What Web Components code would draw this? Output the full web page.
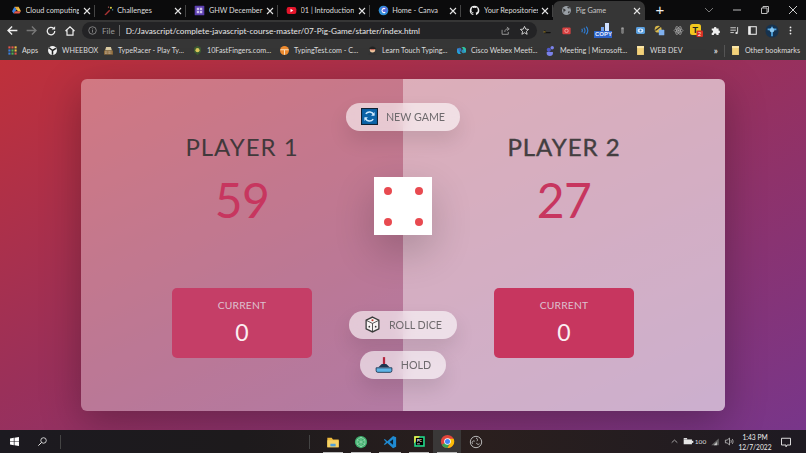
<!DOCTYPE html>
<html lang="en"><head><meta charset="utf-8"><title>Pig Game</title>
<style>
html,body{margin:0;height:100%;overflow:hidden}
body{width:806px;height:453px;font-family:Lato,"Noto Sans",sans-serif}
</style></head><body>
<browser-window>
  <tab-strip>
    <browser-tab icon="drive">Cloud computing</browser-tab>
    <browser-tab icon="spark">Challenges</browser-tab>
    <browser-tab icon="ghw">GHW December</browser-tab>
    <browser-tab icon="yt">01 | Introduction</browser-tab>
    <browser-tab icon="canva">Home - Canva</browser-tab>
    <browser-tab icon="github">Your Repositories</browser-tab>
    <browser-tab icon="globe" active>Pig Game</browser-tab>
  </tab-strip>
  <browser-toolbar></browser-toolbar>
  <bookmark-bar>
    <book-mark icon="apps" w="16">Apps</book-mark>
    <book-mark icon="wheel" w="32">WHEEBOX</book-mark>
    <book-mark icon="racer" w="65">TypeRacer - Play Ty...</book-mark>
    <book-mark icon="fast" w="63">10FastFingers.com...</book-mark>
    <book-mark icon="orange" w="64">TypingTest.com - C...</book-mark>
    <book-mark icon="learn" w="65">Learn Touch Typing...</book-mark>
    <book-mark icon="webex" w="65">Cisco Webex Meeti...</book-mark>
    <book-mark icon="teams" w="66">Meeting | Microsoft...</book-mark>
    <book-mark icon="folder" w="31">WEB DEV</book-mark>
  </bookmark-bar>
  <pig-game>
    <game-player name="PLAYER 1" score="59" current="0"></game-player>
    <game-player name="PLAYER 2" score="27" current="0" active></game-player>
  </pig-game>
  <task-bar></task-bar>
</browser-window>

<script>
const ICONS={
 drive:'<path d="M5 2.500h6l-3 5z" fill="#e8a33d"/><path d="M5 2.500L1.500 9l2.300 3.500L8 7z" fill="#3b82e0"/><path d="M3.800 12.500h8.500L14.500 9H6z" fill="#e2574c"/><path d="M11 2.500L14.500 9H10L8 6z" fill="#f4c242"/>',
 spark:'<path d="M2 14L9 7l1.500 1.500L4 15z" fill="#a33"/><circle cx="11.500" cy="4" r="1.500" fill="#d8d040"/><circle cx="14" cy="7" r="1" fill="#5bc"/><circle cx="8" cy="3" r="1" fill="#c66"/>',
 ghw:'<rect x="1" y="1" width="14" height="14" rx="1" fill="#5c3fb0"/><rect x="4" y="4" width="8" height="8" fill="#cfc4ee"/><path d="M4 8h8M8 4v8" stroke="#5c3fb0"/>',
 yt:'<rect x="1" y="3" width="14" height="10" rx="3" fill="#e4152b"/><path d="M6.500 5.500v5l4-2.500z" fill="#fff"/>',
 canva:'<circle cx="8" cy="8" r="7" fill="#2f8fd8"/><circle cx="9" cy="7" r="4.500" fill="#6a5be0" opacity=".7"/><path d="M10.500 5.500a3 3 0 1 0 0 5" fill="none" stroke="#fff" stroke-width="1.500"/>',
 github:'<path d="M8 1a7 7 0 0 0-2.200 13.600c.4.100.5-.1.500-.3v-1.300c-1.900.4-2.300-.9-2.300-.9-.3-.8-.8-1-.8-1-.6-.4.100-.4.100-.4.700 0 1 .7 1 .7.600 1.100 1.700.8 2.100.6.100-.5.200-.8.400-1-1.600-.2-3.200-.8-3.200-3.500 0-.8.300-1.400.700-1.900-.1-.2-.3-.9.100-1.900 0 0 .6-.2 2 .7a7 7 0 0 1 3.600 0c1.400-.9 2-.7 2-.7.400 1 .2 1.700.1 1.900.4.500.7 1.100.7 1.900 0 2.700-1.600 3.300-3.200 3.500.3.200.5.600.5 1.300v1.900c0 .2.100.4.500.3A7 7 0 0 0 8 1z" fill="#eee"/>',
 globe:'<circle cx="8" cy="8" r="6.500" fill="#9aa0a6"/><path d="M3 5l3 1 1 2-2 1-1 3M10 2l-1 2 2 1 3-.5M11 9l2 .5-1.500 3L10 11z" fill="#3a3a3a"/>',
 apps:'<g><rect x="2" y="2" width="3" height="3" fill="#e2574c"/><rect x="6.500" y="2" width="3" height="3" fill="#e2574c"/><rect x="11" y="2" width="3" height="3" fill="#f4c242"/><rect x="2" y="6.500" width="3" height="3" fill="#3b82e0"/><rect x="6.500" y="6.500" width="3" height="3" fill="#4caf50"/><rect x="11" y="6.500" width="3" height="3" fill="#f4c242"/><rect x="2" y="11" width="3" height="3" fill="#3b82e0"/><rect x="6.500" y="11" width="3" height="3" fill="#4caf50"/><rect x="11" y="11" width="3" height="3" fill="#e2574c"/></g>',
 wheel:'<circle cx="8" cy="8" r="6.500" fill="#f2f2f2"/><path d="M8 8L3 4M8 8l5-3M8 8v6" stroke="#222" stroke-width="2.200"/>',
 racer:'<path d="M3 8l1.500-5h7L13 8z" fill="#d9c9a0"/><rect x="1.500" y="8" width="13" height="6" fill="#8d6a3a"/><path d="M3 10h10M3 12h10" stroke="#eee" stroke-dasharray="1 1"/>',
 fast:'<path d="M8 1l5 3v6l-5 5-5-5V4z" fill="#3c5a32"/><circle cx="8" cy="7.500" r="3" fill="#d8c75a"/>',
 orange:'<circle cx="8" cy="8" r="6.500" fill="#ee8a2e"/><path d="M2 7h12M8 7v7" stroke="#fbe0c0" stroke-width="1.500"/>',
 learn:'<circle cx="8" cy="7" r="4" fill="#f0c8a0"/><path d="M3 6c0-5 10-5 10 0z" fill="#222"/><path d="M2 14c1-3 11-3 12 0z" fill="#333"/><rect x="5" y="6.500" width="6" height="1" fill="#c33"/>',
 webex:'<path d="M1.500 5c3-1 3 7 6.500 7-1 1.500-5 2-6.500-1.500z" fill="#23a6d9"/><path d="M14.500 11c-3 1-3-7-6.500-7 1-1.500 5-2 6.500 1.500z" fill="#2ec6a0"/><circle cx="5" cy="7" r="3" fill="#3b82e0" opacity=".8"/><circle cx="11" cy="9" r="3" fill="#2fa8d8" opacity=".8"/>',
 teams:'<circle cx="10.500" cy="4" r="2.500" fill="#7b83eb"/><circle cx="5.500" cy="7" r="3" fill="#5059c9"/><path d="M2.500 10h9v2a4.500 4 0 0 1-9 0z" fill="#7b83eb"/>',
 folder:'<path d="M3 1.500h10v13H3z" fill="#f4d27a"/><path d="M3 1.500h10v3H3z" fill="#fbe6a8"/>',
 arrowL:'<path d="M14 8H3M7.500 3L2.500 8l5 5" fill="none" stroke="#eee" stroke-width="1.700"/>',
 arrowR:'<path d="M2 8h11M8.500 3l5 5-5 5" fill="none" stroke="#777" stroke-width="1.700"/>',
 reload:'<path d="M13 8a5 5 0 1 1-1.500-3.500" fill="none" stroke="#eee" stroke-width="1.700"/><path d="M13.500 1.500v4.500H9z" fill="#eee"/>',
 home:'<path d="M2 8l6-5.500L14 8M4 7v6.500h8V7" fill="none" stroke="#eee" stroke-width="1.600"/>',
 info:'<circle cx="8" cy="8" r="5.500" fill="none" stroke="#999" stroke-width="1.100"/><path d="M8 7v4M8 5v1.200" stroke="#999" stroke-width="1.100"/>',
 share:'<path d="M3 7v6.500h9V10M7 10c0-3 2-4.500 5-4.500M10 3l3.500 2.700L10 8.300" fill="none" stroke="#aaa" stroke-width="1.200"/>',
 star:'<path d="M8 2l1.800 4 4.200.400-3.200 2.800 1 4.300L8 11.200l-3.800 2.300 1-4.300L2 6.400 6.200 6z" fill="none" stroke="#ddd" stroke-width="1.300"/>',
 blk:'<path d="M3 8h2l1 2h7l-1 2H3z" fill="#111"/><path d="M1 10l4-1v2z" fill="#c9a227"/>',
 cam:'<rect x="2" y="3.500" width="12" height="10" rx="1.500" fill="#d84040"/><circle cx="8" cy="8.500" r="2.500" fill="none" stroke="#f8c0c0"/>',
 wave:'<path d="M4 5.500c1 1.500 1 3.500 0 5M7 4c2 2.500 2 6 0 8M10.500 2.500c3 3.500 3 7.500 0 11" fill="none" stroke="#2f7fd8" stroke-width="1.600"/>',
 mic:'<rect x="6" y="3" width="4" height="10" rx="2" fill="#7a7a7a"/><rect x="6.500" y="5" width="3" height="1" fill="#bbb"/>',
 eye:'<rect x="1.500" y="3" width="13" height="10" rx="2" fill="#5aa0e0"/><ellipse cx="8" cy="8" rx="4" ry="3" fill="#dcecff"/><circle cx="8" cy="8" r="1.500" fill="#2f6db0"/>',
 color:'<circle cx="6" cy="6" r="5" fill="#d8b84a"/><path d="M2 8l9-7" stroke="#333" stroke-width="2"/><rect x="7" y="7" width="8" height="8" rx="1" fill="#7fb0ee"/>',
 atom:'<g fill="none" stroke="#aaa"><ellipse cx="8" cy="8" rx="6.500" ry="2.500"/><ellipse cx="8" cy="8" rx="6.500" ry="2.500" transform="rotate(60 8 8)"/><ellipse cx="8" cy="8" rx="6.500" ry="2.500" transform="rotate(120 8 8)"/></g><circle cx="8" cy="8" r="1.500" fill="#aaa"/>',
 puzzle:'<path d="M2.500 5h3a2 2 0 1 1 4 0h3v3a2 2 0 1 1 0 4v2.500h-3a2 2 0 1 0-4 0h-3v-3a2 2 0 1 0 0-4z" fill="#eee"/>',
 music:'<path d="M2 4h8M2 7.500h8M2 11h5" stroke="#ddd" stroke-width="1.300"/><path d="M12.500 3v8" stroke="#ddd" stroke-width="1.300"/><circle cx="11" cy="11.500" r="1.700" fill="#ddd"/>',
 panel:'<rect x="2.500" y="2.500" width="11" height="11" fill="none" stroke="#eee" stroke-width="1.500"/><rect x="2.500" y="2.500" width="3" height="11" fill="#eee"/>',
 avatar:'<circle cx="8" cy="8" r="7.500" fill="#15324f"/><path d="M3 6h10M8 3v11" stroke="#4fa3e0" stroke-width="2"/><circle cx="8" cy="7" r="2.500" fill="#8cc8f0"/>',
 dots:'<g fill="#eee"><circle cx="8" cy="3.500" r="1.300"/><circle cx="8" cy="8" r="1.300"/><circle cx="8" cy="12.500" r="1.300"/></g>',
 win:'<path d="M1.500 3.500L7 2.700V7.500H1.500zM8 2.500L14.500 1.500V7.500H8zM1.500 8.500H7v4.800l-5.500-.8zM8 8.500h6.500v6L8 13.500z" fill="#fff"/>',
 search:'<circle cx="9.500" cy="6.500" r="4" fill="none" stroke="#eee" stroke-width="1.200"/><path d="M6.500 9.500L2 14" stroke="#eee" stroke-width="1.400"/>',
 explorer:'<path d="M1.500 3h5l1.500 2h6.500v9h-13z" fill="#eeb93c"/><rect x="1.500" y="6" width="13" height="8" fill="#f6d265"/><rect x="5" y="10" width="6" height="3" fill="#4fa0d8"/>',
 green:'<circle cx="8" cy="8" r="7" fill="#3fae6d"/><path d="M8 2.500l4.500 3v5L8 13.500l-4.500-3v-5z" fill="none" stroke="#a8e0bd" stroke-width=".8"/><path d="M3.500 5.500l9 5M12.500 5.500l-9 5M8 2.500v11" stroke="#a8e0bd" stroke-width=".6"/>',
 vscode:'<path d="M11.500 1L15 2.700v10.600L11.500 15 5 9l-3 2.300L1 10.500 3.500 8 1 5.500 2 4.700 5 7z" fill="#1f8ad2"/><path d="M11.500 4.800L7.500 8l4 3.200z" fill="#0d1f2f"/>',
 pycharm:'<rect x="1.500" y="1.500" width="13" height="13" fill="#21d789"/><path d="M1.500 1.500h7l-7 9z" fill="#fcf84a"/><rect x="3.500" y="3.500" width="9" height="9" fill="#000"/><rect x="5" y="10.500" width="3.500" height=".9" fill="#fff"/><text x="4.800" y="8.500" font-size="4.500" font-family="Liberation Sans" font-weight="700" fill="#fff">PC</text>',
 chrome:'<circle cx="8" cy="8" r="7" fill="#e2453c"/><path d="M8 8L2 11.500A7 7 0 0 0 8 15l3-7z" fill="#36a852"/><path d="M8 5h6.500A7 7 0 0 1 8 15l3-5z" fill="#fbbc05"/><circle cx="8" cy="8" r="3.500" fill="#fff"/><circle cx="8" cy="8" r="2.700" fill="#4285f4"/>',
 obs:'<circle cx="8" cy="8" r="6.500" fill="none" stroke="#bbb" stroke-width="1.100"/><path d="M8 3.500a2 2 0 0 1 1 3.500M12 10a2 2 0 0 1-3.500-1M4 10a2 2 0 0 1 2.500-3" fill="none" stroke="#bbb" stroke-width="1.100"/>',
 chev:'<path d="M3 10l5-4.500 5 4.500" fill="none" stroke="#ddd" stroke-width="1.200"/>',
 batt:'<rect x="1" y="5" width="12" height="7" fill="#e6e6e6"/><rect x="13" y="7" width="2" height="3" fill="#e6e6e6"/><rect x="1" y="3" width="5" height="2" fill="#e6e6e6"/>',
 wifi:'<path d="M2 13L14 2.500V13z" fill="#666"/><path d="M6 13l5-5v5z" fill="#ccc"/>',
 speaker:'<path d="M2 6h2.500L8 3v10L4.500 10H2z" fill="none" stroke="#ddd"/><path d="M10 6c.8 1.300.8 2.700 0 4M12 4.500c1.500 2 1.500 5 0 7" fill="none" stroke="#ddd"/>',
 notify:'<path d="M2 3h12v9H9.500L8 14.500V12H2z" fill="none" stroke="#eee" stroke-width="1.200"/>',
 refresh:'<rect width="16" height="16" fill="#0c63a8"/><rect x=".5" y=".5" width="15" height="15" fill="none" stroke="#123"/><path d="M12 6.500A4.300 4.300 0 0 0 4.500 5.500M4 9.500a4.300 4.300 0 0 0 7.500 1" fill="none" stroke="#cfeaff" stroke-width="1.400"/><path d="M12.800 3.800v3.500H9.500zM3.200 12.200V8.700h3.300z" fill="#cfeaff"/>',
 dice:'<path d="M8 1l6 3v8l-6 3-6-3V4z" fill="#f7f3f3" stroke="#3a3a3a" stroke-width="1.200"/><path d="M2 4l6 3 6-3M8 7v8" fill="none" stroke="#3a3a3a" stroke-width=".8"/><circle cx="8" cy="4" r="1" fill="#c0392b"/><circle cx="5" cy="10" r=".8" fill="#333"/><circle cx="11" cy="10" r=".8" fill="#333"/>',
 hold:'<path d="M8 1v7" stroke="#b3243c" stroke-width="2"/><path d="M6 7h4l3 3H3z" fill="#1d3550"/><path d="M1 10.500h14v2.500a1.500 1.500 0 0 1-1.500 1.500h-11A1.500 1.500 0 0 1 1 13z" fill="#5fb4e6" stroke="#1d3550" stroke-width=".8"/>'
};
function icon(name,size){return `<svg width="${size}" height="${size}" viewBox="0 0 16 16" style="display:block;flex:none" aria-hidden="true">${ICONS[name]}</svg>`}
function el(name,html){customElements.define(name,class extends HTMLElement{connectedCallback(){if(!this.shadowRoot){this.attachShadow({mode:'open'}).innerHTML=typeof html==='function'?html(this):html}}})}

el('browser-window',`<style>:host{display:flex;flex-direction:column;width:806px;height:453px;overflow:hidden;filter:blur(.4px)}</style><slot></slot>`);

el('tab-strip',`<style>
:host{display:flex;height:20px;background:#0b0b0c;flex:none;padding-left:3px;align-items:flex-end;color:#eee}
.plus{margin:0 0 1px 9px;font:300 15px/18px "Liberation Sans",sans-serif;width:12px;text-align:center}
.sp{flex:1}
.w{display:flex;align-self:center;margin-right:-1px}
.w span{width:28px;display:flex;justify-content:center}
</style><slot></slot><span class="plus">+</span><span class="sp"></span>
<div class="w"><span><svg width="10" height="10" viewBox="0 0 10 10"><path d="M1 3l4 4 4-4" fill="none" stroke="#777"/></svg></span>
<span><svg width="10" height="10" viewBox="0 0 10 10"><path d="M1 5h8" stroke="#bbb"/></svg></span>
<span><svg width="10" height="10" viewBox="0 0 10 10"><path d="M1.500 3h5.500v5.500H1.500zM3 3V1.500h5.500V7H7" fill="none" stroke="#bbb"/></svg></span>
<span><svg width="10" height="10" viewBox="0 0 10 10"><path d="M1 1l8 8M9 1l-8 8" stroke="#ccc"/></svg></span></div>`);

el('browser-tab',t=>{const a=t.hasAttribute('active');return `<style>
:host{display:flex;align-items:center;box-sizing:border-box;width:91.700px;height:19px;padding:0 4px 0 8px;font-size:7.300px;color:${a?'#c8c8c8':'#ddd'};border-radius:7px 7px 0 0;background:${a?'#363636':'transparent'};position:relative;gap:3.500px}
.t{flex:1;white-space:nowrap;overflow:hidden}
.x{flex:none;width:8px;height:8px}
${a?'':`:host::after{content:"";position:absolute;right:0;top:4px;height:12px;width:1px;background:#444}`}
</style>${icon(t.getAttribute('icon'),11)}<span class="t"><slot></slot></span><svg class="x" viewBox="0 0 8 8"><path d="M1 1l6 6M7 1L1 7" stroke="#e4e4e4" stroke-width="1.100"/></svg>`});

el('browser-toolbar',`<style>
:host{display:flex;align-items:center;height:21px;background:#363636;flex:none;padding-left:3px;box-sizing:border-box;color:#ddd}
.n{width:19px;display:flex;justify-content:center}
.addr{display:flex;align-items:center;width:455px;height:17px;border-radius:9px;background:#232325;margin-left:3px;padding:0 3px 0 5px;box-sizing:border-box;font-size:8.200px;flex:none}
.file{color:#9a9a9a;margin:0 4px 0 4px}
.bar{width:1px;height:11px;background:#666;margin-right:6px}
.url{color:#e6e6e6;white-space:nowrap;flex:1}
.ext{display:flex;margin-left:1px;align-items:center}
.ext span{width:18.700px;display:flex;justify-content:center}
.in{width:19px;display:flex;justify-content:center}
.copy{position:relative;width:18px;height:15px;display:block}
.copy i{position:absolute;display:block}
.copy b{position:absolute;left:0;right:0;bottom:0;height:7px;background:#2d62c8;color:#e8f0ff;font:700 6px/7px "Liberation Sans",sans-serif;text-align:center}
</style>
<span class="n">${icon('arrowL',13)}</span><span class="n">${icon('arrowR',13)}</span><span class="n">${icon('reload',12)}</span><span class="n">${icon('home',12)}</span>
<div class="addr">${icon('info',11)}<span class="file">File</span><span class="bar"></span><span class="url">D:/Javascript/complete-javascript-course-master/07-Pig-Game/starter/index.html</span><span class="in">${icon('share',11)}</span><span class="in">${icon('star',11)}</span></div>
<div class="ext">${['blk','cam','wave'].map(n=>`<span>${icon(n,11)}</span>`).join('')}
<span><div class="copy"><i style="left:7px;top:4px;width:3px;height:4px;background:#6fa0ee"></i><i style="left:11px;top:0;width:4px;height:8px;background:#cfe0ff"></i><b>COPY</b></div></span>
${['mic','eye','color','atom'].map(n=>`<span>${icon(n,11)}</span>`).join('')}
<span><svg width="13" height="13" viewBox="0 0 13 13"><rect width="11" height="11" rx="2.500" fill="#f2c81e"/><text x="2.500" y="9" font-size="9" font-weight="700" font-family="Liberation Sans" fill="#222">T</text><rect x="6.500" y="6.500" width="6.500" height="6.500" rx="1" fill="#d93025"/><text x="8" y="12" font-size="5.500" font-family="Liberation Sans" fill="#fff">2</text></svg></span>
${['puzzle','music','panel','avatar','dots'].map(n=>`<span>${icon(n,n==='avatar'?14:11)}</span>`).join('')}</div>`);

el('bookmark-bar',`<style>
:host{display:flex;align-items:center;height:19px;background:#363636;flex:none;padding-left:7px;box-sizing:border-box;gap:9px}
.sp{flex:1}
.m{color:#ddd;font:700 9px Lato,sans-serif;margin-right:6px}
.b{width:1px;height:12px;background:#555;margin-right:5px}
.o{display:flex;align-items:center;gap:4px;font-size:7.200px;color:#ddd;white-space:nowrap;margin-right:6px}
.r{display:flex;align-items:center}
</style><slot></slot><span class="sp"></span><div class="r"><span class="m">»</span><span class="b"></span><span class="o">${icon('folder',11)}Other bookmarks</span></div>`);

el('book-mark',t=>`<style>
:host{display:flex;align-items:center;gap:4px;font-size:7.200px;color:#ddd;white-space:nowrap}
.t{display:block;width:${t.getAttribute('w')}px}
</style>${icon(t.getAttribute('icon'),11)}<span class="t"><slot></slot></span>`);

el('pig-game',`<style>
:host{display:flex;flex:1;min-height:0;align-items:center;justify-content:center;background:linear-gradient(to bottom right,#bf303a,#9a305a 45%,#78368a);box-sizing:border-box}
main{position:relative;width:644px;height:332px;margin-top:-1px;border-radius:6px;overflow:hidden;background:rgba(255,255,255,.35);display:grid;grid-template-columns:1fr 1fr;box-shadow:0 12px 40px rgba(0,0,0,.28)}
.center{position:absolute;inset:0;display:flex;flex-direction:column;align-items:center;padding-top:24px}
</style>
<main><slot></slot><div class="center">
<pill-button icon="refresh">NEW GAME</pill-button>
<game-die></game-die>
<pill-button icon="dice" style="margin-top:76px">ROLL DICE</pill-button>
<pill-button icon="hold" style="margin-top:12px">HOLD</pill-button>
</div></main>`);

el('game-player',t=>{const a=t.hasAttribute('active');return `<style>
:host{display:flex;flex-direction:column;align-items:center;box-sizing:border-box;padding-top:52px;${a?'background:rgba(255,255,255,.4);':''}}
h2{margin:0;font-size:24px;line-height:32px;font-weight:400;color:#333;opacity:.9;letter-spacing:1px;${a?'-webkit-text-stroke:.4px #333;':''}}
.s{font-size:48px;line-height:58px;margin-top:8px;color:#c7365f;font-weight:400;letter-spacing:-.5px}
.c{margin-top:59px;width:140.500px;height:70px;background:${a?'#c7365f':'#c53e67'};border-radius:5px;color:#fff;display:flex;flex-direction:column;align-items:center;padding-top:10px;box-sizing:border-box}
.l{font-size:10.300px;line-height:15px;color:#ddc0cf;letter-spacing:.2px}
.v{font-size:23px;line-height:30px;margin-top:4px;color:#fbeef2}
</style><h2>${t.getAttribute('name')}</h2><div class="s">${t.getAttribute('score')}</div><div class="c"><div class="l">CURRENT</div><div class="v">${t.getAttribute('current')}</div></div>`});

el('pill-button',t=>`<style>
:host{display:flex;align-items:center;gap:8px;height:28px;padding:0 15px;border-radius:14px;background:rgba(255,255,255,.6);color:#6e6a6d;font-size:10.700px;box-shadow:0 10px 20px rgba(0,0,0,.1);backdrop-filter:blur(6px);flex:none}
</style>${icon(t.getAttribute('icon'),t.getAttribute('icon')==='hold'?18:17)}<slot></slot>`);

el('game-die',`<style>
:host{display:block;margin-top:46px;width:58px;height:58px;background:#fff;box-shadow:0 16px 40px rgba(0,0,0,.2);flex:none}
svg{display:block}
</style><svg width="58" height="58" viewBox="0 0 58 58"><g fill="#e84a50"><circle cx="14" cy="14" r="4"/><circle cx="45" cy="14" r="4"/><circle cx="14" cy="45" r="4"/><circle cx="45" cy="45" r="4"/></g></svg>`);

el('task-bar',`<style>
:host{display:flex;align-items:center;height:23px;flex:none;background:linear-gradient(90deg,#1c1a20,#1d1a1c 30%,#2a1f1e 60%,#1e1a22);color:#ddd;font-size:6.700px;position:relative}
.s{width:28px;height:23px;display:flex;justify-content:center;align-items:center;flex:none}
.sep{width:1px;height:14px;background:#444;flex:none}
.sp{flex:1}
.on{background:#3a3838;position:relative}
.u::after{content:"";position:absolute;left:4px;right:4px;bottom:0;height:1.500px;background:#bbb}
.u{position:relative}
.t{display:flex;justify-content:center;width:14px;flex:none}
.c{text-align:center;line-height:10px;width:38px;color:#eee;flex:none}
</style>
<span class="s">${icon('win',11)}</span><span class="s">${icon('search',11)}</span><span class="sep" style="margin-left:4px"></span>
<span style="width:248px;flex:none"></span><span class="sep"></span>
<span style="width:9px;flex:none"></span>
<span class="s u">${icon('explorer',14)}</span><span class="s u">${icon('green',14)}</span><span class="s u" style="width:30px">${icon('vscode',14)}</span><span class="s u">${icon('pycharm',13)}</span><span class="s on u">${icon('chrome',15)}</span><span class="s" style="margin-left:1px">${icon('obs',14)}</span>
<span class="sp"></span>
<span class="t">${icon('chev',9)}</span><span class="t">${icon('batt',11)}</span><span class="t" style="font-size:6.500px;white-space:nowrap;width:11px">100</span><span class="t" style="margin-left:2px">${icon('wifi',10)}</span><span class="t">${icon('speaker',11)}</span>
<div class="c">1:43 PM<br>12/7/2022</div><span class="s" style="width:24px;margin-right:8px">${icon('notify',12)}</span>`);
</script>
</body></html>
